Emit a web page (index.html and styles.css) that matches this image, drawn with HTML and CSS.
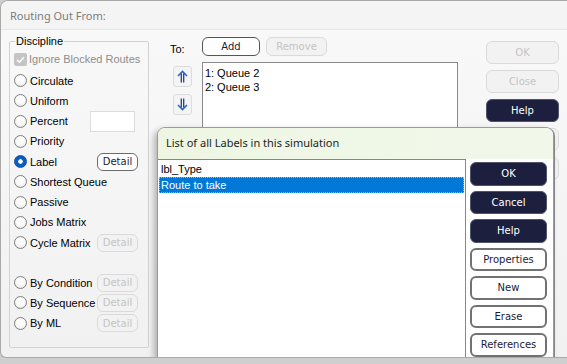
FILE: index.html
```html
<!DOCTYPE html>
<html>
<head>
<meta charset="utf-8">
<link rel="stylesheet" href="styles.css">
</head>
<body>
<div class="window">
  <div class="titlebar">Routing Out From:</div>
  <div class="content">
    <div class="group">
      <span class="group-title">Discipline</span>
      <div class="row check-row">
        <span class="checkbox"><svg width="13" height="13" viewBox="0 0 13 13"><path d="M3 6.8 L5.4 9.2 L10 4.2" fill="none" stroke="#fff" stroke-width="1.4"/></svg></span>
        <span class="label disabled">Ignore Blocked Routes</span>
      </div>
      <div class="row first"><span class="radio"></span><span class="label">Circulate</span></div>
      <div class="row"><span class="radio"></span><span class="label">Uniform</span></div>
      <div class="row"><span class="radio"></span><span class="label">Percent</span><span class="textbox"></span></div>
      <div class="row"><span class="radio"></span><span class="label">Priority</span></div>
      <div class="row"><span class="radio on"></span><span class="label">Label</span><span class="btn detail">Detail</span></div>
      <div class="row"><span class="radio"></span><span class="label">Shortest Queue</span></div>
      <div class="row"><span class="radio"></span><span class="label">Passive</span></div>
      <div class="row"><span class="radio"></span><span class="label">Jobs Matrix</span></div>
      <div class="row"><span class="radio"></span><span class="label">Cycle Matrix</span><span class="btn detail off">Detail</span></div>
      <div class="row spacer"></div>
      <div class="row"><span class="radio"></span><span class="label">By Condition</span><span class="btn detail off">Detail</span></div>
      <div class="row"><span class="radio"></span><span class="label">By Sequence</span><span class="btn detail off">Detail</span></div>
      <div class="row"><span class="radio"></span><span class="label">By ML</span><span class="btn detail off">Detail</span></div>
    </div>

    <div class="middle">
      <div class="to-row">
        <span class="to-label">To:</span>
        <span class="btn add">Add</span>
        <span class="btn remove off">Remove</span>
      </div>
      <div class="list-area">
        <div class="arrows">
          <span class="arrow-btn"><svg width="11" height="13" viewBox="0 0 11 13"><path d="M1 6 L5.5 1.5 L10 6" fill="none" stroke="#2766cc" stroke-width="1.6"/><path d="M4.3 3.5 V12.5 M6.7 3.5 V12.5" stroke="#1f3f8f" stroke-width="1.3"/></svg></span>
          <span class="arrow-btn"><svg width="11" height="13" viewBox="0 0 11 13"><path d="M1 7 L5.5 11.5 L10 7" fill="none" stroke="#2766cc" stroke-width="1.6"/><path d="M4.3 0.5 V9.5 M6.7 0.5 V9.5" stroke="#1f3f8f" stroke-width="1.3"/></svg></span>
        </div>
        <div class="listbox">
          <div class="item">1: Queue 2</div>
          <div class="item">2: Queue 3</div>
        </div>
      </div>
    </div>

    <div class="side">
      <span class="btn side-btn off">OK</span>
      <span class="btn side-btn off">Close</span>
      <span class="btn side-btn dark">Help</span>
      <span class="btn side-btn off"></span>
      <span class="btn side-btn off"></span>
    </div>
  </div>

  <div class="dialog">
    <div class="dlg-header">List of all Labels in this simulation</div>
    <div class="dlg-body">
      <div class="dlg-list">
        <div class="dlg-item">lbl_Type</div>
        <div class="dlg-item selected">Route to take</div>
      </div>
      <div class="dlg-buttons">
        <span class="btn dbtn dark">OK</span>
        <span class="btn dbtn dark">Cancel</span>
        <span class="btn dbtn dark">Help</span>
        <span class="btn dbtn">Properties</span>
        <span class="btn dbtn">New</span>
        <span class="btn dbtn">Erase</span>
        <span class="btn dbtn">References</span>
      </div>
    </div>
  </div>
</div>
</body>
</html>
```

FILE: styles.css
```css
html, body {
  margin: 0;
  padding: 0;
}
body {
  width: 567px;
  height: 364px;
  background: #cfcfcf;
  overflow: hidden;
  font-family: "Liberation Sans", Arial, sans-serif;
  font-size: 11px;
  color: #000;
}
.window {
  position: relative;
  box-sizing: border-box;
  width: 567px;
  height: 358px;
  border: 1px solid #a9a9a9;
  border-right: none;
  border-radius: 8px 0 0 6px;
  background: linear-gradient(#f9f9f9, #f1f1f1);
  overflow: hidden;
}
.titlebar {
  box-sizing: border-box;
  height: 29px;
  padding: 7px 0 0 9px;
  font-family: "Noto Sans", "Open Sans", sans-serif;
  font-size: 11px;
  color: #7c7c7c;
  background: #f4f4f4;
  border-bottom: 1px solid #e8e8e8;
}
.content {
  display: flex;
  align-items: flex-start;
}
.group {
  position: relative;
  box-sizing: border-box;
  width: 140px;
  height: 307px;
  margin: 11px 0 0 8px;
  border: 1px solid #d2d2d2;
  border-radius: 2px;
  padding-top: 7px;
}
.group-title {
  position: absolute;
  top: -7px;
  left: 5px;
  padding: 0 1px;
  line-height: 13px;
  background: #f8f8f8;
}
.row {
  display: flex;
  align-items: center;
  height: 20.25px;
}
.row.first { margin-top: 1.5px; }
.row.spacer { height: 19.75px; }
.check-row { height: 20px; }
.checkbox {
  box-sizing: border-box;
  width: 13px;
  height: 13px;
  margin-left: 4px;
  border-radius: 2px;
  background: #c4c4c4;
  display: block;
}
.checkbox svg { display: block; }
.check-row .label { margin-left: 2px; }
.label.disabled { color: #8d8d8d; }
.radio {
  box-sizing: border-box;
  width: 13px;
  height: 13px;
  margin-left: 4px;
  margin-right: 3px;
  border-radius: 50%;
  border: 1px solid #7f7f7f;
  background: radial-gradient(circle at 50% 40%, #ffffff 30%, #e4e4e4 100%);
  flex: none;
}
.radio.on {
  border: 1px solid #0a4fa8;
  background: radial-gradient(circle, #ffffff 0 2px, #0b5cc6 2.5px);
}
.textbox {
  box-sizing: border-box;
  width: 45px;
  height: 21px;
  margin-left: auto;
  margin-right: 13px;
  background: #fff;
  border: 1px solid #dcdcdc;
}
.btn {
  box-sizing: border-box;
  display: flex;
  align-items: center;
  justify-content: center;
  font-family: "DejaVu Sans", Verdana, sans-serif;
  font-size: 10px;
  color: #1b1b3a;
  background: #fff;
  border: 1.5px solid #6c6c6c;
  border-radius: 6px;
}
.btn.off {
  color: #c4c4c4;
  background: #f2f2f2;
  border: 1px solid #dadada;
}
.btn.dark {
  color: #fff;
  background: #1c1f3d;
  border: 1.5px solid #50536a;
}
.detail {
  width: 41px;
  height: 18px;
  margin-left: auto;
  margin-right: 10px;
}
.middle {
  width: 292px;
  margin-left: 17px;
  padding-top: 7px;
}
.to-row {
  display: flex;
  align-items: center;
  height: 19px;
}
.to-label {
  margin-left: 4px;
  width: 32px;
  padding-top: 4px;
}
.add {
  width: 58px;
  height: 19px;
  border-color: #555;
}
.remove {
  width: 61px;
  height: 19px;
  margin-left: 6px;
}
.list-area {
  display: flex;
  margin-top: 6px;
}
.arrows {
  display: flex;
  flex-direction: column;
  margin-left: 7px;
  width: 29px;
}
.arrow-btn {
  box-sizing: border-box;
  width: 19px;
  height: 21px;
  margin-top: 4px;
  margin-bottom: 3px;
  display: flex;
  align-items: center;
  justify-content: center;
  background: #f4f4f4;
  border: 1px solid #dcdcdc;
  border-radius: 3px;
}
.listbox {
  box-sizing: border-box;
  width: 257px;
  height: 110px;
  background: #fff;
  border: 1px solid #8a8a8a;
  padding: 3px 0 0 2px;
}
.item {
  line-height: 14px;
}
.side {
  display: flex;
  flex-direction: column;
  margin-left: 28px;
  padding-top: 11px;
}
.side-btn {
  width: 73px;
  height: 23px;
  margin-bottom: 6px;
}
.dialog {
  position: absolute;
  left: 156px;
  top: 126px;
  box-sizing: border-box;
  width: 397px;
  height: 232px;
  background: #fff;
  border: 1px solid #9a9a9a;
  border-radius: 8px 8px 2px 2px;
  box-shadow: -3px 3px 6px rgba(0, 0, 0, 0.28), 1px 1px 0 #8c8c8c;
  overflow: hidden;
}
.dlg-header {
  box-sizing: border-box;
  height: 31px;
  padding: 7px 0 0 8px;
  font-family: "Noto Sans", "Open Sans", sans-serif;
  font-size: 11px;
  color: #1e1e1e;
  background: linear-gradient(90deg, #eef6e3, #f1f8ea);
}
.dlg-body {
  display: flex;
}
.dlg-list {
  box-sizing: border-box;
  width: 309px;
  height: 200px;
  margin-left: -1px;
  border: 1px solid #828790;
  padding: 1px 0 0 1px;
}
.dlg-item {
  height: 16px;
  line-height: 16px;
  padding-left: 2px;
}
.dlg-item.selected {
  box-sizing: border-box;
  margin-right: 1px;
  background: #0078d7;
  color: #fff;
  border: 1px dotted #e9a84a;
  padding-left: 1px;
  line-height: 14px;
}
.dlg-buttons {
  display: flex;
  flex-direction: column;
  margin-left: 4px;
  padding-top: 3px;
}
.dbtn {
  width: 77px;
  height: 23.5px;
  margin-bottom: 5px;
  border-width: 2px;
  border-color: #727272;
}
.dbtn.dark {
  border-width: 1.5px;
}
```
